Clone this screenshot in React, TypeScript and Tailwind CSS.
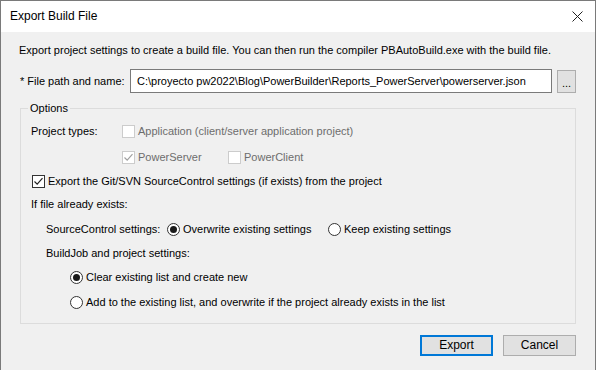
import React from "react";

const font = { fontFamily: '"Liberation Sans", Arial, sans-serif' };

function Check({ checked, disabled }: { checked?: boolean; disabled?: boolean }) {
  return (
    <span
      className={`w-[13px] h-[13px] shrink-0 border bg-white flex items-center justify-center ${
        disabled ? "border-[#cccccc]" : "border-[#333333]"
      }`}
    >
      {checked && (
        <svg width="11" height="11" viewBox="0 0 11 11">
          <path
            d="M1.5 5.5 L4.2 8.2 L9.5 2.2"
            fill="none"
            stroke={disabled ? "#a0a0a0" : "#222222"}
            strokeWidth="1.2"
          />
        </svg>
      )}
    </span>
  );
}

function Radio({ checked }: { checked?: boolean }) {
  return (
    <span className="w-[13px] h-[13px] shrink-0 rounded-full border border-[#333333] bg-white flex items-center justify-center">
      {checked && <span className="w-[7px] h-[7px] rounded-full bg-[#1a1a1a]" />}
    </span>
  );
}

export default function App() {
  return (
    <div
      className="w-[596px] h-[370px] bg-[#f0f0f0] border-x border-t border-[#7a7a7a] overflow-hidden text-[11px] text-black leading-[15px] whitespace-nowrap"
      style={font}
    >
      {/* Title bar */}
      <div className="h-[31px] bg-white flex items-center justify-between pl-[9px] pr-[12px] text-[12px]">
        <span>Export Build File</span>
        <svg width="11" height="11" viewBox="0 0 11 11">
          <path d="M0.5 0.5 L10.5 10.5 M10.5 0.5 L0.5 10.5" stroke="#222" strokeWidth="1" />
        </svg>
      </div>

      <div className="px-[19px]">
        <p className="mt-[11px] -ml-px">
          Export project settings to create a build file. You can then run the compiler PBAutoBuild.exe with the build file.
        </p>

        {/* File path row */}
        <div className="mt-[11px] flex items-center h-[24px]">
          <span className="w-[110px] shrink-0">* File path and name:</span>
          <div className="w-[422px] h-[24px] bg-white border border-[#7a7a7a] flex items-center pl-[6px] overflow-hidden">
            C:\proyecto pw2022\Blog\PowerBuilder\Reports_PowerServer\powerserver.json
          </div>
          <div className="ml-[5px] w-[19px] h-[23px] bg-[#e1e1e1] border border-[#adadad] flex items-end justify-center pb-[3px] leading-none">
            ...
          </div>
        </div>

        {/* Options group */}
        <fieldset className="mt-[8px] border border-[#dcdcdc] px-[10px] pb-[11px]">
          <legend className="ml-[-3px] px-[2px] leading-[15px]">Options</legend>

          <div className="h-[30px] flex items-center">
            <span className="w-[91px] shrink-0">Project types:</span>
            <div className="flex items-center gap-[3px] text-[#6d6d6d]">
              <Check disabled />
              <span>Application (client/server application project)</span>
            </div>
          </div>

          <div className="h-[22px] flex items-center pl-[91px] text-[#6d6d6d]">
            <div className="w-[106px] flex items-center gap-[3px]">
              <Check checked disabled />
              <span>PowerServer</span>
            </div>
            <div className="flex items-center gap-[3px]">
              <Check disabled />
              <span>PowerClient</span>
            </div>
          </div>

          <div className="h-[26px] flex items-center gap-[3px] pl-px">
            <Check checked />
            <span>Export the Git/SVN SourceControl settings (if exists) from the project</span>
          </div>

          <div className="h-[20px] flex items-center">If file already exists:</div>

          <div className="h-[30px] flex items-center pl-[15px]">
            <span className="w-[121px] shrink-0">SourceControl settings:</span>
            <div className="w-[161px] flex items-center gap-[3px]">
              <Radio checked />
              <span>Overwrite existing settings</span>
            </div>
            <div className="flex items-center gap-[3px]">
              <Radio />
              <span>Keep existing settings</span>
            </div>
          </div>

          <div className="h-[18px] flex items-center pl-[15px]">BuildJob and project settings:</div>

          <div className="h-[30px] flex items-center gap-[3px] pl-[39px]">
            <Radio checked />
            <span>Clear existing list and create new</span>
          </div>

          <div className="h-[20px] flex items-center gap-[3px] pl-[39px]">
            <Radio />
            <span>Add to the existing list, and overwrite if the project already exists in the list</span>
          </div>
        </fieldset>

        {/* Buttons */}
        <div className="mt-[11px] flex justify-end gap-[10px] text-[12px]">
          <button className="w-[73px] h-[21px] bg-[#e1e1e1] border-2 border-[#0078d7] flex items-center justify-center">
            Export
          </button>
          <button className="w-[73px] h-[21px] bg-[#e1e1e1] border border-[#adadad] flex items-center justify-center">
            Cancel
          </button>
        </div>
      </div>
    </div>
  );
}
